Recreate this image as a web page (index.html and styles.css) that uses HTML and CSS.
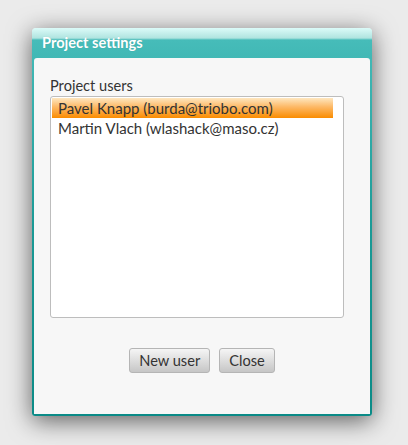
FILE: index.html
```html
<!DOCTYPE html>
<html>
<head>
<meta charset="utf-8">
<link rel="stylesheet" href="styles.css">
</head>
<body>
<div class="dialog">
  <div class="titlebar">Project settings</div>
  <div class="content">
    <div class="label">Project users</div>
    <div class="listbox">
      <div class="row selected">Pavel Knapp (burda@triobo.com)</div>
      <div class="row">Martin Vlach (wlashack@maso.cz)</div>
    </div>
    <div class="buttons">
      <button class="btn">New user</button>
      <button class="btn">Close</button>
    </div>
  </div>
</div>
</body>
</html>
```
FILE: styles.css
```css
html, body {
  margin: 0;
  padding: 0;
  background: #ebebeb;
  height: 445px;
  overflow: hidden;
}
body {
  padding: 28px 0 0 32px;
  box-sizing: border-box;
  font-family: Lato, "Open Sans", sans-serif;
}
.dialog {
  width: 340px;
  height: 388px;
  box-sizing: border-box;
  padding: 0 2px 2px 2px;
  border-radius: 4px 4px 3px 3px;
  background: linear-gradient(to bottom, #dcfbf9 0px, #b0e4e0 10px, #46bcb9 12px, #41b8b5 30px, #1a9a96 200px, #0b8b87 100%);
  box-shadow: 0 5px 24px rgba(0, 0, 0, 0.6);
  display: flex;
  flex-direction: column;
}
.titlebar {
  height: 30px;
  box-sizing: border-box;
  padding: 7px 0 0 8px;
  color: #ffffff;
  font-weight: bold;
  font-size: 14.6px;
  line-height: 16px;
  text-shadow: 0 0 1px rgba(0,0,0,0.15);
}
.content {
  flex: 1;
  background: #f7f7f7;
  border-radius: 3px 3px 0 0;
  padding: 18px 26px 0 16px;
  display: flex;
  flex-direction: column;
}
.label {
  font-size: 14.6px;
  line-height: 20px;
  color: #333;
}
.listbox {
  height: 222px;
  box-sizing: border-box;
  background: #fff;
  border: 1px solid #bdbdbd;
  border-radius: 3px;
  padding: 1px 10px 1px 1px;
}
.row {
  height: 20px;
  line-height: 20px;
  padding-left: 6px;
  font-size: 15px;
  color: #333;
  white-space: nowrap;
}
.row.selected {
  background: linear-gradient(to bottom, #fee7c0 0%, #fdb865 45%, #fa8c00 100%);
}
.buttons {
  display: flex;
  justify-content: center;
  gap: 9px;
  margin-top: 30px;
  padding-left: 10px;
}
.btn {
  height: 25px;
  box-sizing: border-box;
  border: 1px solid #b5b5b5;
  border-radius: 3px;
  background: linear-gradient(to bottom, #f5f5f5, #c6c6c6);
  font-family: Lato, "Open Sans", sans-serif;
  font-size: 14.6px;
  color: #333;
  padding: 0 9px;
  margin: 0;
}
```
